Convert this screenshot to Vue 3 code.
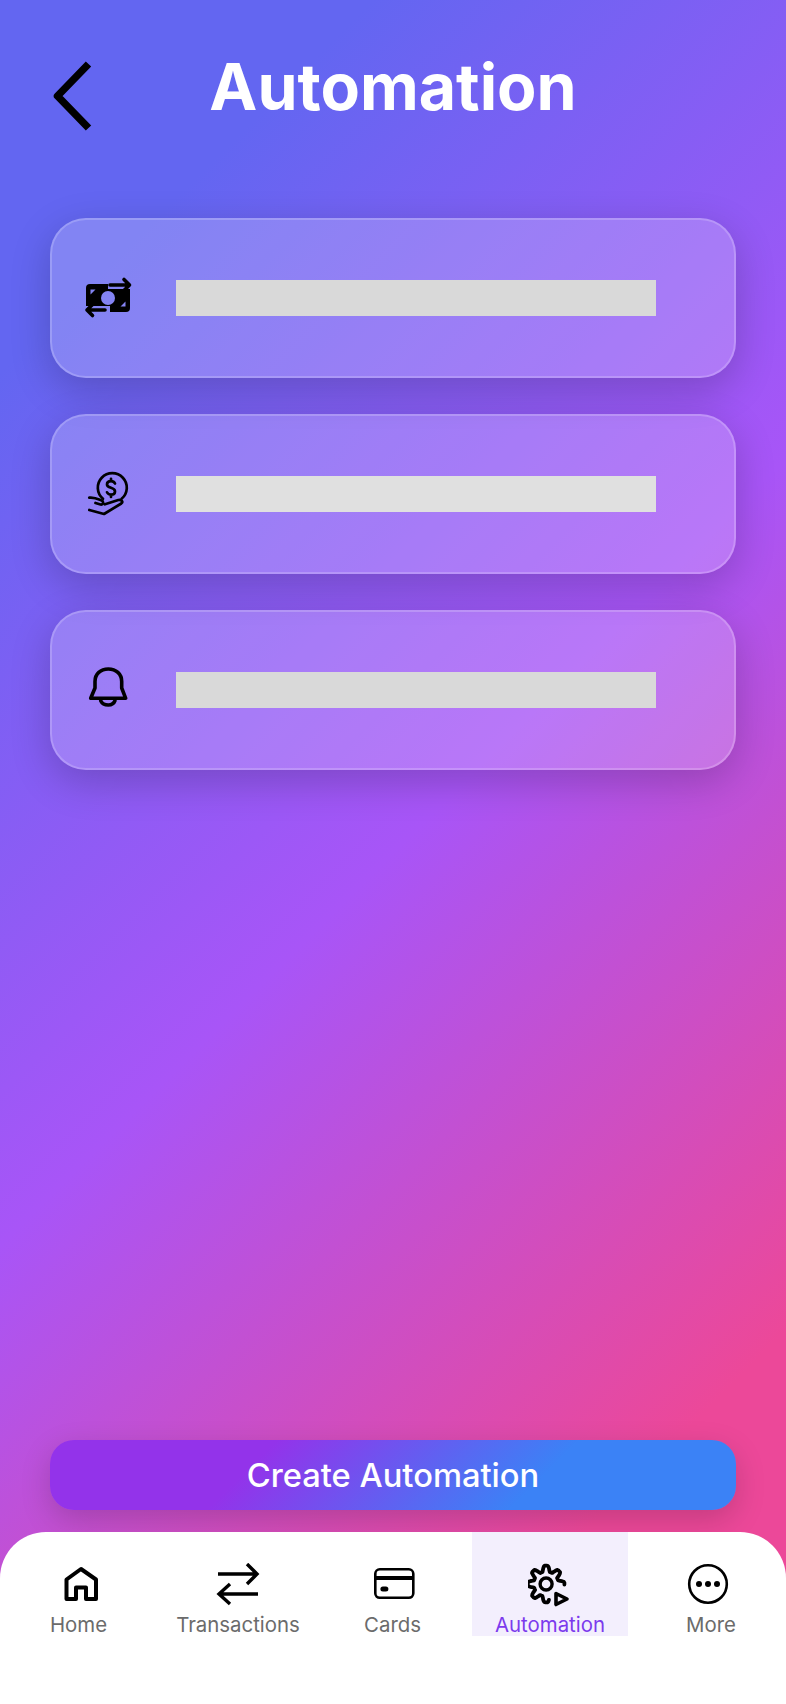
<template>
  <div class="screen">
    <header class="top">
      <button class="back" aria-label="Back">
        <svg width="44" height="72" viewBox="0 0 44 72" fill="none">
          <path d="M38.500 4 L7.500 36 L38.500 68" stroke="#000" stroke-width="7.500" stroke-linejoin="round" />
        </svg>
      </button>
      <h1 class="title">Automation</h1>
    </header>

    <main class="list">
      <div class="card">
        <div class="card-icon">
          <svg width="50" height="44" viewBox="0 0 50 44" fill="none">
            <mask id="cash-cut">
              <rect width="50" height="44" fill="#fff" />
              <circle cx="24" cy="22" r="7" fill="#000" />
              <path d="M6.500 13.500h5l-5 5zM41.500 30.500h-5l5-5z" fill="#000" />
              <path d="M24 9h26M26 34H0" stroke="#000" stroke-width="8" />
            </mask>
            <rect x="2" y="8" width="44" height="28" rx="4" fill="#000" mask="url(#cash-cut)" />
            <path d="M26 9h19.500M40 3.500 45.500 9 40 14.500M21 34H3M8.500 28.500 3 34l5.500 5.500" stroke="#000" stroke-width="3.600" stroke-linecap="round" stroke-linejoin="round" />
          </svg>
        </div>
        <div class="placeholder"></div>
      </div>

      <div class="card">
        <div class="card-icon">
          <svg width="50" height="48" viewBox="-2 0 50 48" fill="none" stroke="#000" stroke-width="2.700" stroke-linecap="round" stroke-linejoin="round">
            <path d="M17 28.800A14.500 14.500 0 1 1 35.600 28.800" />
            <path d="M29 13.500c-.7-1.500-2.200-2.300-4-2.300-2.400 0-4 1.200-4 3.200 0 4.300 8 2.500 8 7 0 2-1.600 3.200-4 3.200-1.800 0-3.300-.8-4-2.300M25 8.800v2.400M25 24.600V27" />
            <path d="M3.300 27.700C8 27 12 29 15.500 30.500c2.500 1 2 4.500-1 4l-5-1.500M19 34.300l13.300-4.300c3.700-.8 5 2 3 3.500L18 44 3.300 40" />
          </svg>
        </div>
        <div class="placeholder light"></div>
      </div>

      <div class="card">
        <div class="card-icon">
          <svg width="50" height="48" viewBox="-4 0 50 48" fill="none" stroke="#000" stroke-width="3.600" stroke-linecap="round" stroke-linejoin="round">
            <path d="M2.700 32.300H37.700L33.700 22V15.500C33.700 8 28 3 20.300 3 12.600 3 7 8 7 15.500V22Z" />
            <path d="M12.700 34.700C14 37.500 17 39 20.300 39 23.600 39 26 37.500 27 34.700" />
          </svg>
        </div>
        <div class="placeholder"></div>
      </div>
    </main>

    <button class="create">Create Automation</button>

    <nav class="tabs">
      <a class="tab home">
        <svg width="44" height="44" viewBox="0 0 44 44" fill="none" stroke="#000" stroke-width="4" stroke-linejoin="round">
          <path d="M22 6 L7.500 16.500 V36 H17 V24.500 H27 V36 H37 V16.500 Z" />
        </svg>
        <span>Home</span>
      </a>
      <a class="tab transactions">
        <svg width="44" height="44" viewBox="0 0 44 44" fill="none" stroke="#000" stroke-width="3.400">
          <path d="M2 11H41M31 1l10 10-10 10M42 31H3M14 21 3 31l11 10" />
        </svg>
        <span>Transactions</span>
      </a>
      <a class="tab">
        <svg width="44" height="44" viewBox="0 0 44 44" fill="none" stroke="#000">
          <rect x="4.300" y="6.300" width="38" height="28.500" rx="4.500" stroke-width="2.600" />
          <path d="M4 15H42" stroke-width="4" />
          <rect x="9.400" y="23.500" width="8" height="5" rx="2.500" fill="#000" stroke="none" />
        </svg>
        <span>Cards</span>
      </a>
      <a class="tab active">
        <svg width="44" height="44" viewBox="0 0 44 44" fill="none" stroke="#000" stroke-linecap="round" stroke-linejoin="round">
          <path :d="gearPath" stroke-width="3.800" />
          <circle cx="18.100" cy="21" r="6" stroke-width="3.400" />
          <path d="M28 30.500 39 36 28 41.500Z" stroke-width="3.600" />
        </svg>
        <span>Automation</span>
      </a>
      <a class="tab more">
        <svg width="44" height="44" viewBox="0 0 44 44" fill="none">
          <circle cx="22" cy="21" r="18.800" stroke="#000" stroke-width="2.600" />
          <circle cx="13" cy="21" r="3" fill="#000" />
          <circle cx="22" cy="21" r="3" fill="#000" />
          <circle cx="31" cy="21" r="3" fill="#000" />
        </svg>
        <span>More</span>
      </a>
    </nav>
  </div>
</template>

<script setup>
// gear outline, left open at the lower right for the play triangle
const points = []
for (let deg = 80; deg <= 362; deg += 3) {
  const a = (deg * Math.PI) / 180
  const wave = Math.max(-1, Math.min(1, 1.5 * Math.cos(8 * a)))
  const r = 15.4 + 2.9 * wave
  points.push(`${(18.1 + r * Math.cos(a)).toFixed(1)} ${(21 + r * Math.sin(a)).toFixed(1)}`)
}
const gearPath = 'M' + points.join('L')
</script>

<style>
html,
body {
  margin: 0;
}
</style>

<style scoped>
.screen {
  width: 786px;
  height: 1704px;
  display: flex;
  flex-direction: column;
  overflow: hidden;
  font-family: Inter, "Liberation Sans", sans-serif;
  background: linear-gradient(135deg, #6366f1 15%, #a855f7 50%, #ec4899 85%);
}

/* header */
.top {
  display: grid;
  grid-template-columns: 1fr auto 1fr;
  height: 168px;
  padding: 50px 50px 0;
  box-sizing: border-box;
  flex-shrink: 0;
}
.back {
  justify-self: start;
  width: 44px;
  height: 72px;
  margin-top: 10px;
  padding: 0;
  border: none;
  background: none;
}
.title {
  margin: 0;
  font-size: 64.400px;
  line-height: 74px;
  font-weight: 700;
  color: #fff;
}

/* cards */
.list {
  flex: 1;
  display: flex;
  flex-direction: column;
  gap: 36px;
  padding: 50px 50px 0;
}
.card {
  height: 160px;
  box-sizing: border-box;
  display: flex;
  align-items: center;
  padding-left: 32px;
  border: 2px solid rgba(255, 255, 255, 0.2);
  border-radius: 36px;
  background: rgba(255, 255, 255, 0.2);
  box-shadow: 0 12px 40px rgba(0, 0, 0, 0.2);
}
.card-icon {
  width: 50px;
  display: flex;
  margin-right: 42px;
}
.placeholder {
  width: 480px;
  height: 36px;
  background: #d9d9d9;
}
.placeholder.light {
  background: #e0e0e0;
}

/* main action */
.create {
  flex-shrink: 0;
  height: 70px;
  margin: 0 50px 22px;
  border: none;
  border-radius: 24px;
  font-family: inherit;
  font-size: 32.700px;
  font-weight: 500;
  color: #fff;
  background: linear-gradient(135deg, #9333ea 30%, #3b82f6 70%);
  box-shadow: 0 10px 30px rgba(0, 0, 0, 0.17);
}

/* bottom nav */
.tabs {
  flex-shrink: 0;
  height: 172px;
  display: grid;
  grid-template-columns: repeat(5, 157px);
  align-items: start;
  background: #fff;
  border-radius: 46px 46px 0 0;
}
.tab {
  height: 104px;
  box-sizing: border-box;
  padding-top: 31px;
  display: flex;
  flex-direction: column;
  align-items: center;
  gap: 6px;
  font-size: 20.400px;
  line-height: 24px;
  color: #6b6b6b;
}
.tab svg {
  flex-shrink: 0;
}
.tab.transactions {
  padding-left: 5px;
}
.tab.more {
  padding-left: 9px;
}
.tab.more svg {
  margin-right: 6px;
}
.tab.home svg {
  margin-left: 4px;
}
.tab.active {
  margin-left: 1px;
  background: #f3effd;
  color: #7c3aed;
}
</style>
